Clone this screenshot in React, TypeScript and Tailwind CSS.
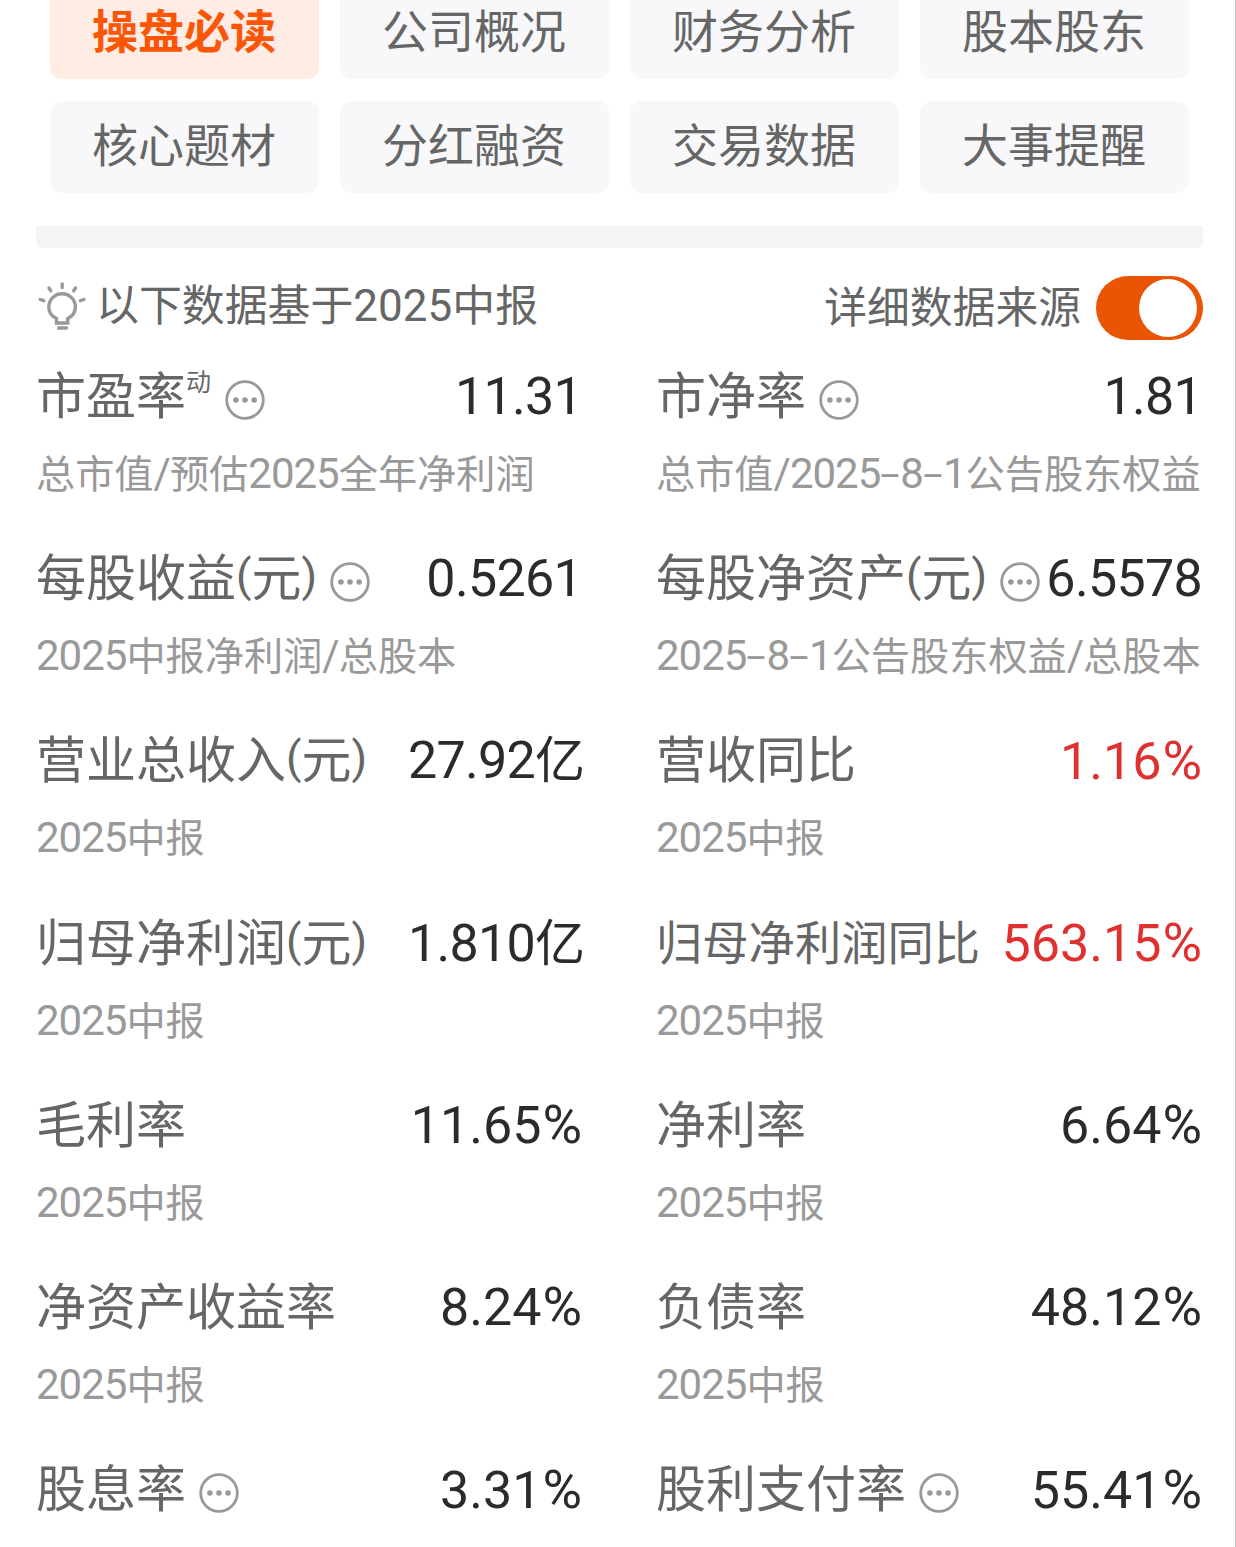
import { Fragment } from 'react';
import clsx from 'clsx';

const tabs = ['操盘必读', '公司概况', '财务分析', '股本股东', '核心题材', '分红融资', '交易数据', '大事提醒'];

type Metric = {
  label: string;
  value: string;
  note?: string;
  sup?: string;
  info?: boolean;
  compact?: boolean;
  up?: boolean;
};

const metrics: Metric[] = [
  { label: '市盈率', sup: '动', info: true, value: '11.31', note: '总市值/预估2025全年净利润' },
  { label: '市净率', info: true, value: '1.81', note: '总市值/2025-8-1公告股东权益' },
  { label: '每股收益(元)', info: true, value: '0.5261', note: '2025中报净利润/总股本' },
  { label: '每股净资产(元)', info: true, value: '6.5578', note: '2025-8-1公告股东权益/总股本' },
  { label: '营业总收入(元)', value: '27.92亿', note: '2025中报' },
  { label: '营收同比', value: '1.16%', note: '2025中报', up: true },
  { label: '归母净利润(元)', value: '1.810亿', note: '2025中报' },
  { label: '归母净利润同比', value: '563.15%', note: '2025中报', compact: true, up: true },
  { label: '毛利率', value: '11.65%', note: '2025中报' },
  { label: '净利率', value: '6.64%', note: '2025中报' },
  { label: '净资产收益率', value: '8.24%', note: '2025中报' },
  { label: '负债率', value: '48.12%', note: '2025中报' },
  { label: '股息率', info: true, value: '3.31%' },
  { label: '股利支付率', info: true, value: '55.41%' },
];

// Splits mixed text so that digits and Chinese can have their own sizes
function Mixed({ text, latin }: { text: string; latin: string }) {
  return (
    <>
      {text.split(/([0-9.]+|[%()/-])/).map((part, i) => {
        if (part === '-') {
          return (
            <span key={i} className="inline-block w-5 -translate-y-px scale-x-180 text-center">
              -
            </span>
          );
        }
        if (part === '(' || part === ')') {
          return (
            <span key={i} className="inline-block -translate-y-[5px] text-[45px] leading-none">
              {part}
            </span>
          );
        }
        if (part === '%') {
          return (
            <span key={i} className="ml-px text-[54px]">
              %
            </span>
          );
        }
        if (/^[0-9./]+$/.test(part)) {
          return (
            <span key={i} className={latin}>
              {part}
            </span>
          );
        }
        return <Fragment key={i}>{part}</Fragment>;
      })}
    </>
  );
}

function MoreIcon() {
  return (
    <svg className="mt-[6px] ml-[13px] size-10 shrink-0" viewBox="0 0 40 40" fill="none">
      <circle cx="20" cy="20" r="18.3" stroke="#999" strokeWidth="2.8" />
      <circle cx="10.9" cy="20" r="2.8" fill="#999" />
      <circle cx="20" cy="20" r="2.8" fill="#999" />
      <circle cx="29.1" cy="20" r="2.8" fill="#999" />
    </svg>
  );
}

function BulbIcon() {
  return (
    <svg className="mb-1 h-12 w-12 shrink-0 overflow-visible" viewBox="0 0 48 48" fill="none" stroke="#999" strokeWidth="3.4">
      <path d="M19.5 41v-4.500c-4.900-2.300-7.700-6.500-7.700-11.500a13.300 13.300 0 0 1 26.600 0c0 5-2.800 9.200-7.700 11.500V41z" />
      <path d="M21.500 46h8" strokeLinecap="round" />
      <path
        strokeLinecap="round"
        d="M25.200 2v3.500M12 6l1.800 2.800M38.500 6l-1.800 2.800M3.200 17.500l3.500 1.200M47 17.500l-3.500 1.200"
      />
    </svg>
  );
}

function MetricCell({ label, value, note, sup, info, compact, up }: Metric) {
  return (
    <div className="h-[182.2px]">
      <div className="flex h-[70px] items-center whitespace-nowrap">
        <div className={clsx('leading-[70px] text-[#666]', compact ? 'text-[46.3px]' : 'text-[50px]')}>
          <Mixed text={label} latin="text-[46px]" />
        </div>
        {sup && <span className="mr-px mb-[30px] text-[25px] leading-none text-[#666]">{sup}</span>}
        {info && <MoreIcon />}
        <div
          className={clsx(
            'ml-auto text-[50px] leading-[70px]',
            up ? 'text-[#e03131]' : 'text-[#2b2b2b]',
            value.endsWith('亿') && '-mr-[3px]',
          )}
        >
          <Mixed
            text={value}
            latin={value.endsWith('%') ? 'text-[52px]' : 'text-[52px] tracking-[-0.7px]'}
          />
        </div>
      </div>
      {note && (
        <div className="mt-3 text-[39.2px] leading-[60px] whitespace-nowrap text-[#999]">
          <Mixed text={note} latin="text-[42px] tracking-[-1px]" />
        </div>
      )}
    </div>
  );
}

export default function App() {
  return (
    <div className="h-[1547px] w-[1236px] overflow-hidden border-r border-[#c4c4c4] bg-white font-[Roboto,'Noto_Sans_CJK_SC',sans-serif]">
      {/* Section tabs */}
      <div className="-mt-[13px] grid grid-cols-[repeat(4,269px)] gap-x-[21px] gap-y-[22px] pl-[50px]">
        {tabs.map((tab, i) => (
          <button
            key={tab}
            className={clsx(
              'h-[92px] rounded-[12px] pr-px pb-[2px] text-[46px] leading-[90px]',
              i === 0 ? 'bg-[#ffece4] font-bold text-[#fb5607]' : 'bg-[#f8f8fa] text-[#666]',
            )}
          >
            {tab}
          </button>
        ))}
      </div>

      <div className="mt-[33px] ml-9 h-[22px] w-[1167px] rounded-b-[6px] bg-[#f5f5f5]" />

      {/* Data source */}
      <div className="mt-[24px] flex h-[72px] items-center pr-8 pl-[37px] text-[#666]">
        <BulbIcon />
        <div className="mb-[3px] ml-[11px] text-[42.900px] leading-[67px]">
          <Mixed text="以下数据基于2025中报" latin="text-[44px]" />
        </div>
        <div className="ml-auto text-[42.800px] leading-[70px]">详细数据来源</div>
        <button className="ml-[15px] flex h-16 w-[107px] items-center justify-end rounded-full bg-[#ea5504] pr-[6px]">
          <span className="size-[58px] rounded-full bg-white" />
        </button>
      </div>

      {/* Metrics */}
      <div className="mt-[18px] grid grid-cols-[546px_546px] gap-x-[74px] pl-9">
        {metrics.map((metric) => (
          <MetricCell key={metric.label} {...metric} />
        ))}
      </div>
    </div>
  );
}
